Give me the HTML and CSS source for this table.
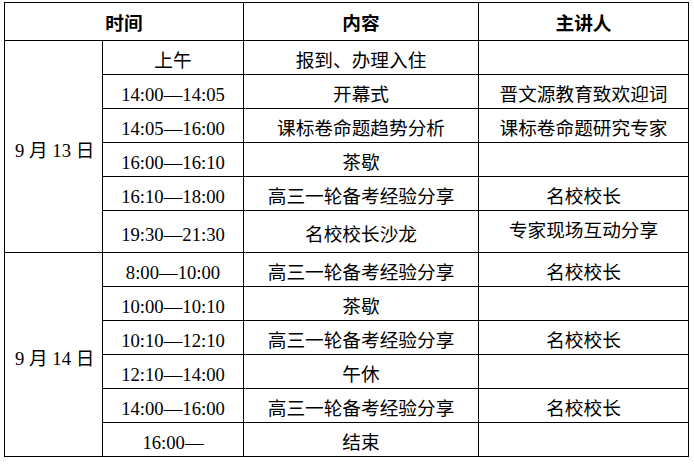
FILE: index.html
```html
<!DOCTYPE html>
<html lang="zh-CN">
<head>
<meta charset="utf-8">
<title>日程安排</title>
<link rel="stylesheet" href="styles.css">
</head>
<body>
<table class="schedule">
  <colgroup>
    <col class="c-day">
    <col class="c-time">
    <col class="c-content">
    <col class="c-speaker">
  </colgroup>
  <thead>
    <tr class="row-head">
      <th colspan="2">时间</th>
      <th>内容</th>
      <th>主讲人</th>
    </tr>
  </thead>
  <tbody>
    <tr>
      <td class="day" rowspan="6">9 月 13 日</td>
      <td>上午</td>
      <td>报到、办理入住</td>
      <td></td>
    </tr>
    <tr>
      <td>14:00—14:05</td>
      <td>开幕式</td>
      <td>晋文源教育致欢迎词</td>
    </tr>
    <tr>
      <td>14:05—16:00</td>
      <td>课标卷命题趋势分析</td>
      <td>课标卷命题研究专家</td>
    </tr>
    <tr>
      <td>16:00—16:10</td>
      <td>茶歇</td>
      <td></td>
    </tr>
    <tr>
      <td>16:10—18:00</td>
      <td>高三一轮备考经验分享</td>
      <td>名校校长</td>
    </tr>
    <tr class="row-tall">
      <td>19:30—21:30</td>
      <td>名校校长沙龙</td>
      <td class="raised">专家现场互动分享</td>
    </tr>
    <tr>
      <td class="day" rowspan="6">9 月 14 日</td>
      <td>8:00—10:00</td>
      <td>高三一轮备考经验分享</td>
      <td>名校校长</td>
    </tr>
    <tr>
      <td>10:00—10:10</td>
      <td>茶歇</td>
      <td></td>
    </tr>
    <tr>
      <td>10:10—12:10</td>
      <td>高三一轮备考经验分享</td>
      <td>名校校长</td>
    </tr>
    <tr>
      <td>12:10—14:00</td>
      <td>午休</td>
      <td></td>
    </tr>
    <tr>
      <td>14:00—16:00</td>
      <td>高三一轮备考经验分享</td>
      <td>名校校长</td>
    </tr>
    <tr>
      <td>16:00—</td>
      <td>结束</td>
      <td></td>
    </tr>
  </tbody>
</table>
</body>
</html>
```

FILE: styles.css
```css
html, body {
  margin: 0;
  padding: 0;
  background: #ffffff;
}

body {
  padding: 2px 0 0 4px;
  font-family: "Liberation Serif", "Noto Sans CJK SC", serif;
  font-size: 18.67px;
  color: #000000;
}

.schedule {
  border-collapse: collapse;
  table-layout: fixed;
  width: 684px;
}

.c-day { width: 98px; }
.c-time { width: 141px; }
.c-content { width: 235px; }
.c-speaker { width: 210px; }

.schedule th,
.schedule td {
  border: 1px solid #000000;
  padding: 6px 0 0 0;
  text-align: center;
  vertical-align: middle;
  line-height: 22px;
  white-space: nowrap;
  font-weight: normal;
}

.schedule tr { height: 34px; }

.schedule .row-head { height: 38px; }

.schedule .row-head th {
  font-family: "Liberation Serif", "Noto Sans CJK SC", serif;
  font-weight: bold;
  padding-top: 5px;
}

.schedule .row-tall { height: 42px; }

.schedule td.raised {
  padding-top: 2px;
  padding-bottom: 4px;
}

.schedule td.day {
  text-align: left;
  padding-left: 10px;
  padding-top: 8px;
}
```
